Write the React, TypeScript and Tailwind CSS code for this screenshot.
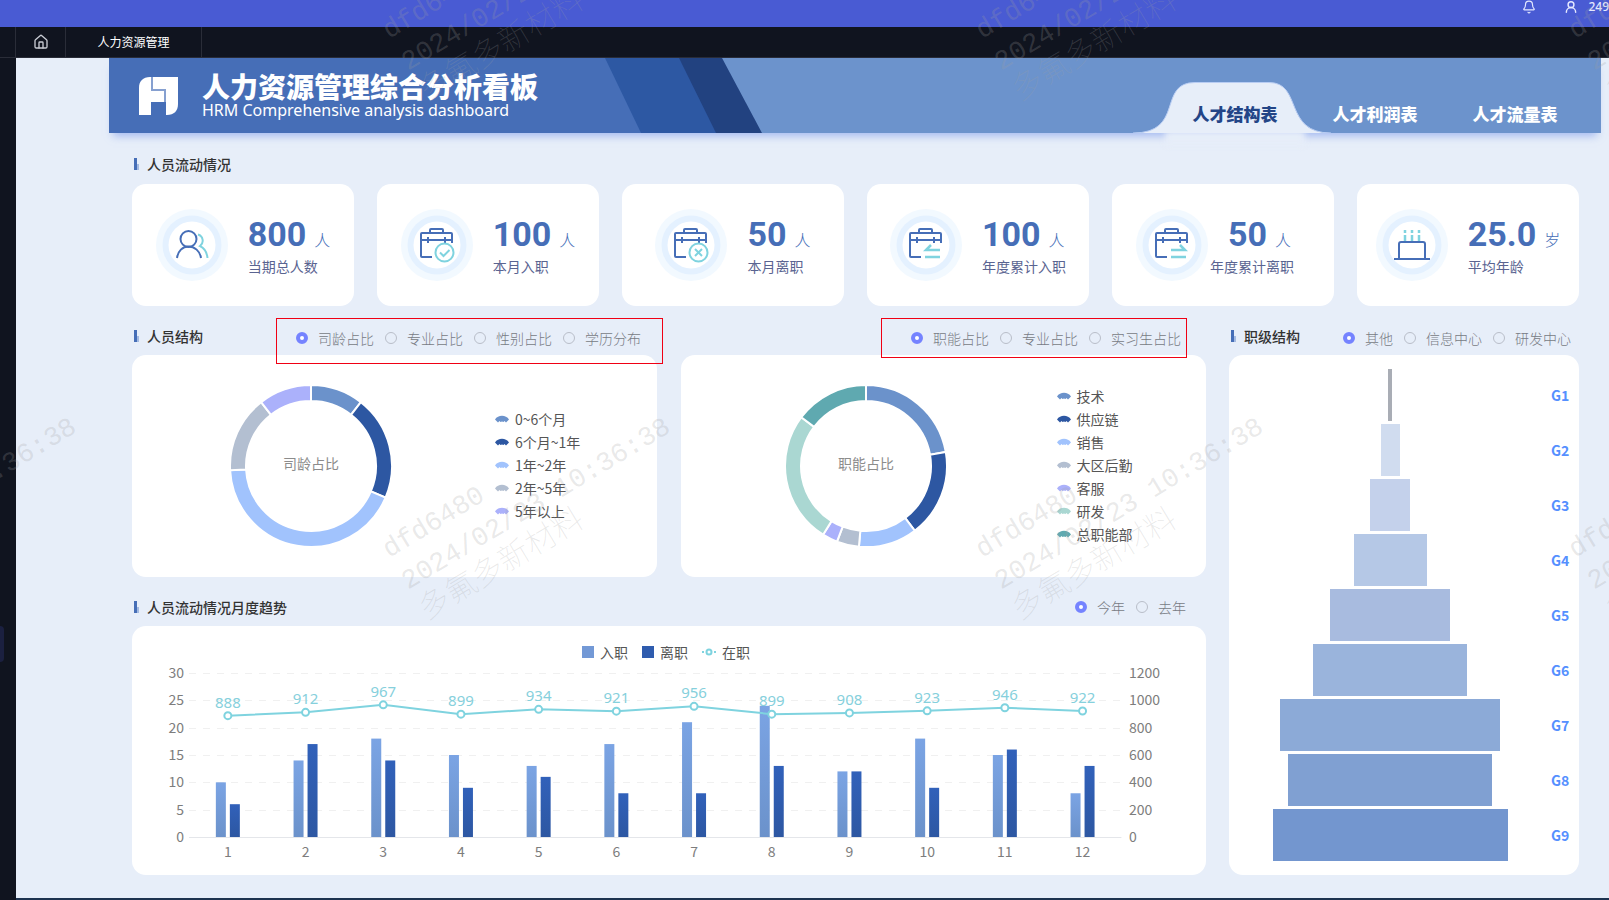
import type { ReactNode } from 'react';
import { Bell, House, UserRound } from 'lucide-react';

type Slice = { label: string; value: number; color: string };

const tenure: Slice[] = [
  { label: '0~6个月', value: 38, color: '#6b92cb' },
  { label: '6个月~1年', value: 75, color: '#2d57a2' },
  { label: '1年~2年', value: 154, color: '#a1c3fd' },
  { label: '2年~5年', value: 55, color: '#b3bfd1' },
  { label: '5年以上', value: 38, color: '#abb1fb' },
];

const functions: Slice[] = [
  { label: '技术', value: 80, color: '#6b92cb' },
  { label: '供应链', value: 63, color: '#2d57a2' },
  { label: '销售', value: 42, color: '#a1c3fd' },
  { label: '大区后勤', value: 16, color: '#b3bfd1' },
  { label: '客服', value: 11, color: '#abb1fb' },
  { label: '研发', value: 95, color: '#aad7d2' },
  { label: '总职能部', value: 53, color: '#5fa9b0' },
];

const levels = [
  { name: 'G1', width: 4, color: '#a9adb5' },
  { name: 'G2', width: 19, color: '#d0dcef' },
  { name: 'G3', width: 40, color: '#c4d1eb' },
  { name: 'G4', width: 73, color: '#b5c8e6' },
  { name: 'G5', width: 120, color: '#a8bbdf' },
  { name: 'G6', width: 154, color: '#9ab4dc' },
  { name: 'G7', width: 220, color: '#8caad7' },
  { name: 'G8', width: 204, color: '#80a0d2' },
  { name: 'G9', width: 235, color: '#7396cf' },
];

const months = [
  { joined: 10, left: 6, total: 888 },
  { joined: 14, left: 17, total: 912 },
  { joined: 18, left: 14, total: 967 },
  { joined: 15, left: 9, total: 899 },
  { joined: 13, left: 11, total: 934 },
  { joined: 17, left: 8, total: 921 },
  { joined: 21, left: 8, total: 956 },
  { joined: 24, left: 13, total: 899 },
  { joined: 12, left: 12, total: 908 },
  { joined: 18, left: 9, total: 923 },
  { joined: 15, left: 16, total: 946 },
  { joined: 8, left: 13, total: 922 },
];

const peopleIcon = (
  <g fill="none" strokeWidth="2">
    <path d="M42 25.5a6.5 6.5 0 0 1 2 11.5c4 2 7 6.500 7.500 12" stroke="#7fd3df" />
    <circle cx="32.500" cy="30" r="8" stroke="#466eb7" />
    <path d="M21 49c1-7 5.500-11.500 11.500-11.500S44 42 45 49" stroke="#466eb7" />
  </g>
);

const caseBody = (
  <g fill="none" stroke="#466eb7" strokeWidth="2">
    <path d="M29 24v-3q0-1 1-1h11q1 0 1 1v3" />
    <path d="M31 48H21q-1 0-1-1V25q0-1 1-1h29q1 0 1 1v9" />
    <path d="M20 31h31M27 28v6M44 28v6" />
  </g>
);

const icons: Record<string, ReactNode> = {
  people: peopleIcon,
  check: (
    <>
      {caseBody}
      <g fill="#fff" stroke="#7fd3df" strokeWidth="2">
        <circle cx="43.500" cy="43.500" r="9" />
        <path d="M39 43.500l3.500 3.500 6-6" fill="none" />
      </g>
    </>
  ),
  cross: (
    <>
      {caseBody}
      <g fill="#fff" stroke="#7fd3df" strokeWidth="2">
        <circle cx="43.500" cy="43.500" r="9" />
        <path d="M40 40l7 7M47 40l-7 7" />
      </g>
    </>
  ),
  arrowIn: (
    <>
      {caseBody}
      <path d="M50 41H36l5-5M35 48h15" fill="none" stroke="#7fd3df" strokeWidth="2.500" />
    </>
  ),
  arrowOut: (
    <>
      {caseBody}
      <path d="M35 41h14l-5-5M35 48h15" fill="none" stroke="#7fd3df" strokeWidth="2.500" />
    </>
  ),
  cake: (
    <g fill="none" strokeWidth="2">
      <path d="M23 50V35q0-2 2-2h22q2 0 2 2v15M18 50h36" stroke="#466eb7" />
      <path d="M29 26v6M36 26v6M43 26v6" stroke="#7fd3df" strokeWidth="2.500" />
      <path d="M29 21v3M36 21v3M43 21v3" stroke="#7fd3df" strokeWidth="2.500" />
    </g>
  ),
};

const metrics = [
  { icon: 'people', value: '800', unit: '人', label: '当期总人数' },
  { icon: 'check', value: '100', unit: '人', label: '本月入职' },
  { icon: 'cross', value: '50', unit: '人', label: '本月离职' },
  { icon: 'arrowIn', value: '100', unit: '人', label: '年度累计入职' },
  { icon: 'arrowOut', value: '50', unit: '人', label: '年度累计离职', tight: true },
  { icon: 'cake', value: '25.0', unit: '岁', label: '平均年龄' },
];

function MetricCard({ icon, value, unit, label, tight }: (typeof metrics)[number]) {
  return (
    <div
      className={`flex h-[122px] items-center justify-center rounded-[14px] bg-white ${tight ? 'gap-0.5 pr-4' : 'gap-5'}`}
    >
      <svg viewBox="0 0 72 72" className="size-[72px] shrink-0">
        <circle cx="36" cy="36" r="36" fill="#f2f9ff" />
        <circle cx="36" cy="36" r="29.500" fill="#e4f1ff" />
        <circle cx="36" cy="36" r="23.500" fill="#fff" />
        {icons[icon]}
      </svg>
      <div>
        <p className={`flex items-baseline gap-2 leading-9 text-[#466eb7] ${tight ? 'pl-[18px]' : ''}`}>
          <span className="font-[Roboto] text-[34px] font-bold">{value}</span>
          <span className="text-base leading-9 font-light">{unit}</span>
        </p>
        <p className="text-sm leading-[18px] whitespace-nowrap text-[#5a6491]">{label}</p>
      </div>
    </div>
  );
}

function SectionTitle({ children }: { children: ReactNode }) {
  return (
    <h2 className="flex items-center gap-2 pl-0.5 text-sm font-medium whitespace-nowrap text-[#333]">
      <span className="flex h-3 items-end">
        <i className="h-3 w-[3px] bg-[#466eb7]" />
        <i className="h-1.5 w-0.5 bg-[#a5bbe2]" />
      </span>
      {children}
    </h2>
  );
}

function RadioGroup({ name, options }: { name: string; options: string[] }) {
  return (
    <div className="flex gap-[11px]">
      {options.map((option, i) => (
        <label key={option} className="flex items-center gap-2.5 text-sm font-light whitespace-nowrap text-[#777b84]">
          <input
            type="radio"
            name={name}
            defaultChecked={i === 0}
            className="size-3 appearance-none rounded-full border border-[#b9bec9] checked:border-4 checked:border-[#7583ff] checked:bg-white"
          />
          {option}
        </label>
      ))}
    </div>
  );
}

function Donut({ title, slices }: { title: string; slices: Slice[] }) {
  const total = slices.reduce((sum, s) => sum + s.value, 0);
  const point = (angle: number, r: number) => {
    const rad = (angle * Math.PI) / 180;
    return `${82 + r * Math.sin(rad)} ${82 - r * Math.cos(rad)}`;
  };
  let angle = 0;

  return (
    <svg viewBox="0 0 164 164" className="size-[164px]">
      {slices.map((s) => {
        const start = angle;
        angle += (s.value / total) * 360;
        const large = angle - start > 180 ? 1 : 0;
        return (
          <path
            key={s.label}
            d={`M${point(start, 81)}A81 81 0 ${large} 1 ${point(angle, 81)}L${point(angle, 65)}A65 65 0 ${large} 0 ${point(start, 65)}Z`}
            fill={s.color}
            stroke="#fff"
            strokeWidth="2"
          />
        );
      })}
      <text x="82" y="85" textAnchor="middle" fontSize="14" fill="#8c8c8c">
        {title}
      </text>
    </svg>
  );
}

function Legend({ slices }: { slices: Slice[] }) {
  return (
    <ul className="pb-0.5 pl-1.5 text-sm leading-[23px] whitespace-nowrap text-[#555]">
      {slices.map((s) => (
        <li key={s.label} className="flex items-center gap-1.5">
          <svg viewBox="0 0 14 8" className="h-2 w-3.5">
            <path d="M0 4.500C3-.5 11-.5 14 4.500L11 7.500 9.500 6 8.500 7 7 6.500 5.500 7 4.500 6 3 7.500Z" fill={s.color} />
          </svg>
          {s.label}
        </li>
      ))}
    </ul>
  );
}

// plot area of the monthly chart, in viewBox units
const X0 = 57;
const STEP = 77.7;
const BASE = 174;
const HEIGHT = 164;

function TrendChart() {
  const cx = (i: number) => X0 + STEP * (i + 0.5);
  const lineY = (v: number) => BASE - (v / 1200) * HEIGHT;

  return (
    <svg viewBox="0 0 1074 212" className="w-full">
      <defs>
        <linearGradient id="joined" x1="0" y1="0" x2="0" y2="1">
          <stop offset="0" stopColor="#7ba4e4" />
          <stop offset="1" stopColor="#6b92cb" />
        </linearGradient>
        <linearGradient id="left" x1="0" y1="0" x2="0" y2="1">
          <stop offset="0" stopColor="#3161ba" />
          <stop offset="1" stopColor="#2d57a2" />
        </linearGradient>
      </defs>
      {[0, 5, 10, 15, 20, 25, 30].map((tick) => {
        const y = BASE - (tick / 30) * HEIGHT;
        return (
          <g key={tick} fontSize="14" fill="#7d7d7d">
            <line
              x1={X0}
              x2={X0 + STEP * 12}
              y1={Math.round(y) + 0.5}
              y2={Math.round(y) + 0.5}
              stroke={tick ? '#f0f0f0' : '#e4e6ea'}
              strokeDasharray={tick ? '7 7' : undefined}
            />
            <text x="52" y={y + 5} textAnchor="end">
              {tick}
            </text>
            <text x="997" y={y + 5}>
              {tick * 40}
            </text>
          </g>
        );
      })}
      {months.map((m, i) => {
        const a = (m.joined / 30) * HEIGHT;
        const b = (m.left / 30) * HEIGHT;
        return (
          <g key={i}>
            <rect x={cx(i) - 12} y={BASE - a} width="10" height={a} fill="url(#joined)" />
            <rect x={cx(i) + 2} y={BASE - b} width="10" height={b} fill="url(#left)" />
            <text x={cx(i)} y="194" textAnchor="middle" fontSize="14" fill="#7d7d7d">
              {i + 1}
            </text>
          </g>
        );
      })}
      <polyline
        points={months.map((m, i) => `${cx(i)},${lineY(m.total)}`).join(' ')}
        fill="none"
        stroke="#7fd3df"
        strokeWidth="2"
      />
      {months.map((m, i) => (
        <g key={i}>
          <circle cx={cx(i)} cy={lineY(m.total)} r="3.5" fill="#fff" stroke="#7fd3df" strokeWidth="2" />
          <text
            x={cx(i)}
            y={lineY(m.total) - 8}
            textAnchor="middle"
            fontSize="15"
            fill="#86d0dc"
            className="font-['Noto_Sans']"
          >
            {m.total}
          </text>
        </g>
      ))}
    </svg>
  );
}

function Watermark() {
  const tiles = [-205, 389, 982, 1575].flatMap((x) => [39, 558].map((y) => ({ x, y })));
  return (
    <svg
      aria-hidden="true"
      className="pointer-events-none absolute inset-0 z-30 size-full font-['Liberation_Mono','Noto_Sans_CJK_SC',monospace]"
    >
      {tiles.map(({ x, y }) => (
        <g key={`${x}-${y}`} transform={`translate(${x} ${y}) rotate(-31)`} fill="#a0a0a0" fillOpacity="0.24">
          <text fontSize="27">dfd6480</text>
          <text y="37" fontSize="27">
            2024/02/23 10:36:38
          </text>
          <text y="73" fontSize="31" fontWeight="100">
            多氟多新材料
          </text>
        </g>
      ))}
    </svg>
  );
}

function Banner() {
  return (
    <div className="relative flex h-[75px] items-center justify-between bg-[#6c93cc] shadow-[0_7px_8px_-4px_rgba(120,152,235,0.6)]">
      <svg viewBox="0 0 653 75" className="absolute top-0 left-0 h-[75px] w-[653px]">
        <path d="M0 0H613L653 75H0Z" fill="#224280" />
        <path d="M0 0H570L607 75H0Z" fill="#2d58a3" />
        <path d="M0 0H496L532 75H0Z" fill="#466eb7" />
      </svg>
      <div className="relative flex items-center gap-6 pl-[30px] text-white">
        <svg viewBox="0 0 39 38" className="h-[38px] w-[39px]" fill="#fff">
          <path d="M12 0v14h13v11H12v13H0V11C0 4 4 0 11 0Z" />
          <path d="M14 0H39V27C39 34 35 38 28 38H27V12H14Z" />
          <path d="M12 0h2v12h13v13h-2V14H12Z" fillOpacity="0.35" />
        </svg>
        <div className="pb-1">
          <h1 className="text-[28px] leading-8 font-black whitespace-nowrap">人力资源管理综合分析看板</h1>
          <p className="font-['Noto_Sans'] text-base leading-4 whitespace-nowrap">
            HRM Comprehensive analysis dashboard
          </p>
        </div>
      </div>
      <nav className="relative flex self-stretch pr-4 text-[17px] font-black text-white">
        <button className="relative w-[140px] pt-9 text-[#234587]">
          <i className="absolute inset-x-0 -bottom-3 h-3.5 bg-[#e7eef9] blur-[3px]" />
          <svg viewBox="0 0 198 51" className="absolute bottom-0 -left-8 h-[51px] w-[198px]">
            <path d="M0 51C52 51 24 .5 62 .5H136C170 .5 150 51 198 51Z" fill="#e7eef9" />
            <path d="M0 51C52 51 24 .5 62 .5H136C170 .5 150 51 198 51" fill="none" stroke="#b9cdf3" />
          </svg>
          <span className="relative">人才结构表</span>
        </button>
        <button className="w-[140px] pt-9">人才利润表</button>
        <button className="w-[140px] pt-9">人才流量表</button>
      </nav>
    </div>
  );
}

export default function App() {
  return (
    <div className="relative flex min-h-screen flex-col overflow-hidden bg-[#10141f] font-['Noto_Sans_CJK_SC',sans-serif]">
      <header className="flex h-[27px] justify-end bg-[#495bd3] text-[#e4e8ff]">
        <Bell className="mr-7 size-3.5" strokeWidth={2} />
        <UserRound className="mr-2.5 size-3.5" strokeWidth={2.5} />
        <span className="font-['Noto_Sans'] text-xs leading-3.5 font-medium">249</span>
      </header>

      <div className="flex h-[31px] border-b border-[#2a2d38] pl-[15px] text-xs text-white">
        <a href="#" aria-label="首页" className="flex w-[51px] items-center justify-center border-x border-[#2a2d38]">
          <House className="size-4 text-[#c9ccd4]" />
        </a>
        <a href="#" className="flex w-[136px] items-center justify-center border-r border-[#2a2d38]">
          人力资源管理
        </a>
      </div>

      <div className="flex flex-1">
        <aside className="flex w-4 shrink-0 flex-col justify-center">
          <i className="mt-[330px] h-9 w-1 rounded-r-sm bg-[#1b2040]" />
        </aside>
        <main className="flex-1 border-b-2 border-[#1d3350] bg-[#e7eef9] pr-2 pb-[23px] pl-[93px]">
          <Banner />

          <div className="pr-[22px] pl-[23px]">
            <div className="flex h-[51px] items-center pt-2.5">
              <SectionTitle>人员流动情况</SectionTitle>
            </div>
            <div className="grid grid-cols-6 gap-[23px]">
              {metrics.map((m) => (
                <MetricCard key={m.label} {...m} />
              ))}
            </div>

            <div className="grid grid-cols-[1074fr_350fr] gap-[23px]">
              <div>
                <div className="grid h-[49px] grid-cols-2 gap-6 pt-2.5">
                  <div className="flex items-center justify-between pr-4">
                    <SectionTitle>人员结构</SectionTitle>
                    <div className="relative mt-1">
                      <RadioGroup name="tenure" options={['司龄占比', '专业占比', '性别占比', '学历分布']} />
                      <span className="pointer-events-none absolute -top-2.5 -right-[22px] -bottom-4 -left-5 z-10 border border-[#f00014]" />
                    </div>
                  </div>
                  <div className="flex items-center justify-end pr-[25px]">
                    <div className="relative mt-1">
                      <RadioGroup name="function" options={['职能占比', '专业占比', '实习生占比']} />
                      <span className="pointer-events-none absolute -top-2.5 -right-1.5 -bottom-2.5 -left-[30px] z-10 border border-[#f00014]" />
                    </div>
                  </div>
                </div>
                <div className="grid grid-cols-2 gap-6">
                  <section className="flex h-[222px] items-center rounded-[14px] bg-white">
                    <div className="flex basis-[68%] justify-center">
                      <Donut title="司龄占比" slices={tenure} />
                    </div>
                    <Legend slices={tenure} />
                  </section>
                  <section className="flex h-[222px] items-center rounded-[14px] bg-white">
                    <div className="flex basis-[70.4%] justify-center">
                      <Donut title="职能占比" slices={functions} />
                    </div>
                    <Legend slices={functions} />
                  </section>
                </div>

                <div className="flex h-[49px] items-center justify-between pt-2.5 pr-5">
                  <SectionTitle>人员流动情况月度趋势</SectionTitle>
                  <RadioGroup name="year" options={['今年', '去年']} />
                </div>
                <section className="rounded-[14px] bg-white pt-[15px]">
                  <div className="flex h-[22px] items-center justify-center gap-3.5 pr-1.5 text-sm text-[#555]">
                    <span className="flex items-center gap-1.5">
                      <i className="size-3 bg-[#7399d6]" />
                      入职
                    </span>
                    <span className="flex items-center gap-1.5">
                      <i className="size-3 bg-[#2f5cae]" />
                      离职
                    </span>
                    <span className="flex items-center gap-1.5">
                      <svg viewBox="0 0 14 8" className="h-2 w-3.5" fill="none" stroke="#7fd3df" strokeWidth="2">
                        <path d="M0 4h2M12 4h2" />
                        <circle cx="7" cy="4" r="2.500" />
                      </svg>
                      在职
                    </span>
                  </div>
                  <TrendChart />
                </section>
              </div>

              <div className="flex flex-col">
                <div className="flex h-[49px] items-center justify-between pt-2.5 pr-2">
                  <SectionTitle>职级结构</SectionTitle>
                  <div className="mt-1">
                    <RadioGroup name="level" options={['其他', '信息中心', '研发中心']} />
                  </div>
                </div>
                <section className="flex-1 rounded-[14px] bg-white pt-3 pb-3">
                  {levels.map((level) => (
                    <div key={level.name} className="flex h-[55px] items-center">
                      <div className="flex basis-[92%] justify-center">
                        <div
                          className="h-[52px]"
                          style={{ width: `${(level.width / 322) * 100}%`, background: level.color }}
                        />
                      </div>
                      <span className="text-sm font-bold text-[#5590ff]">{level.name}</span>
                    </div>
                  ))}
                </section>
              </div>
            </div>
          </div>
        </main>
      </div>

      <Watermark />
    </div>
  );
}
